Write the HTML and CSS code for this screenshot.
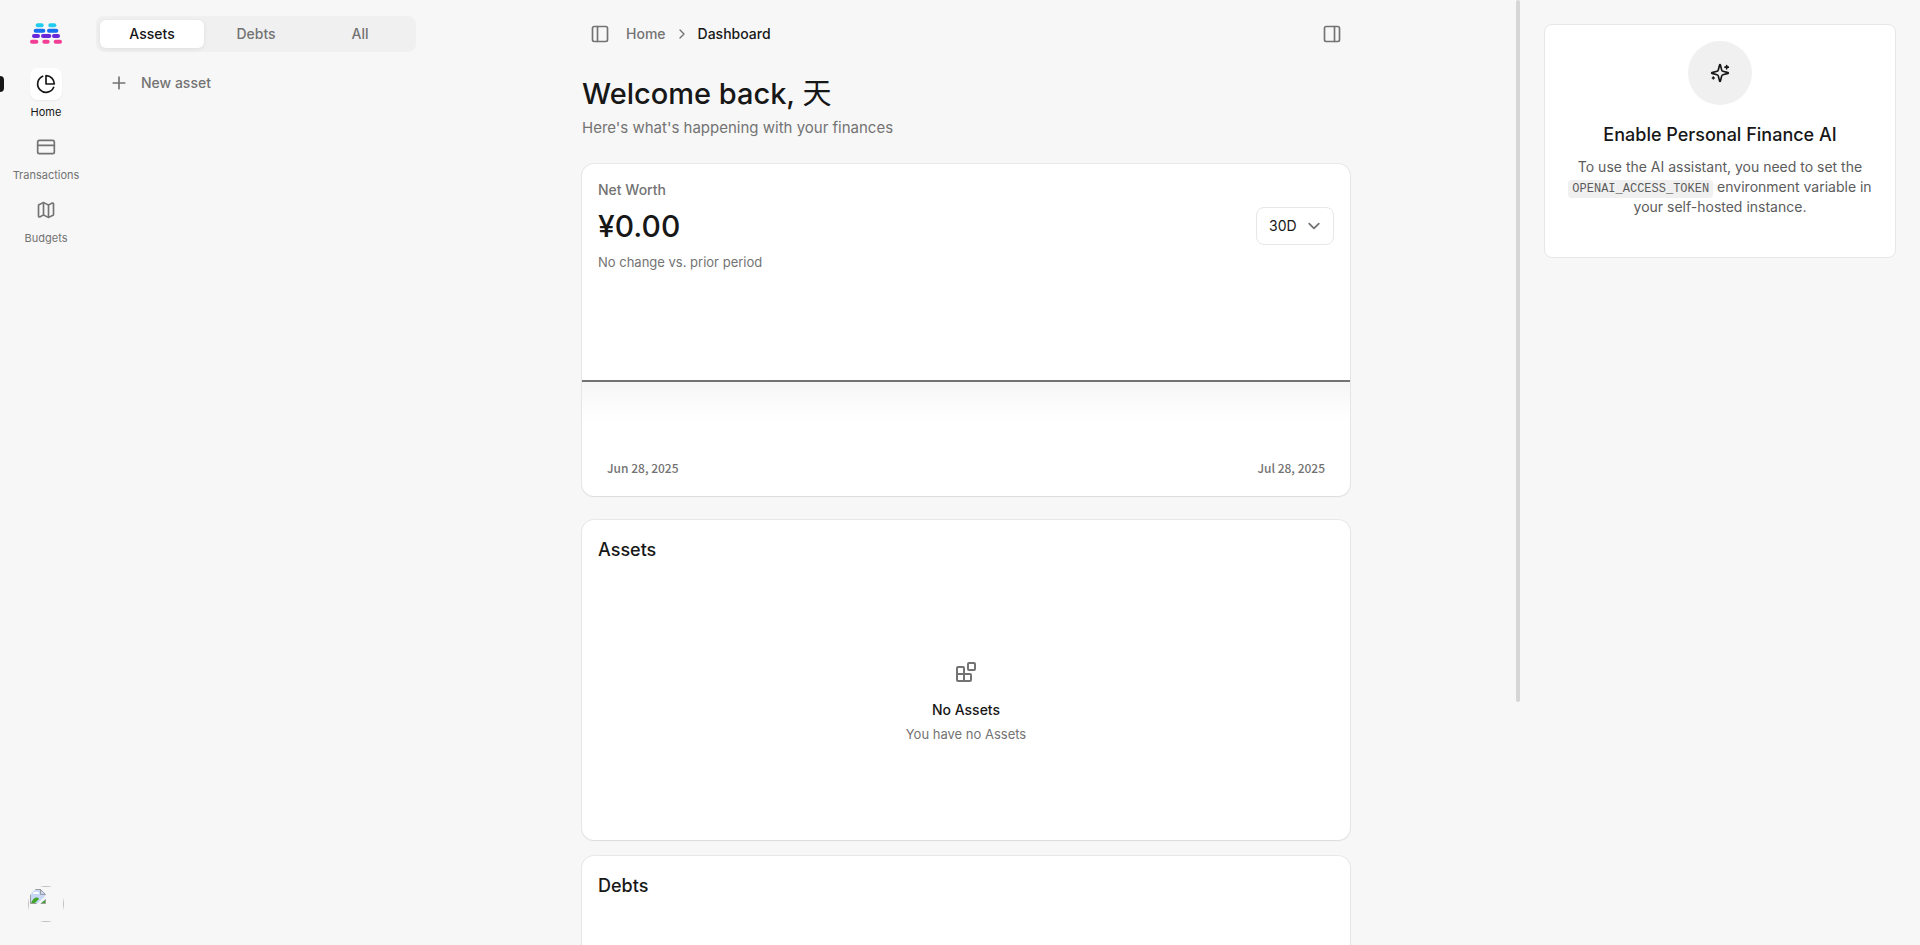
FILE: index.html
```html
<!doctype html>
<html lang="en">
	<head>
		<meta charset="utf-8">
		<meta name="viewport" content="width=device-width, initial-scale=1">
		<title>Dashboard</title>
		<link rel="stylesheet" href="styles.css">
	</head>
	<body>
		<div class="app">
			<nav class="rail">
				<a class="logo" href="#" aria-label="Home page">
					<svg width="32" height="21" viewBox="0 0 96 63">
						<g fill="#22ccee"><rect x="17" y="1" width="24" height="12" rx="6"/><rect x="55" y="1" width="24" height="12" rx="6"/></g>
						<g fill="#1570ef"><rect x="11" y="17" width="35" height="12" rx="6"/><rect x="51" y="17" width="34" height="12" rx="6"/></g>
						<g fill="#6927da"><rect x="6" y="33" width="24" height="12" rx="6"/><rect x="33" y="33" width="31" height="12" rx="6"/><rect x="66" y="33" width="24" height="12" rx="6"/></g>
						<g fill="#f23e94"><rect x="0" y="50" width="25" height="12" rx="6"/><rect x="37" y="50" width="22" height="12" rx="6"/><rect x="71" y="50" width="25" height="12" rx="6"/></g>
					</svg>
				</a>
				<ul class="rail-list">
					<li>
						<a class="rail-item active" href="#">
							<span class="rail-icon"><svg class="icon" viewBox="0 0 24 24"><path d="M21.21 15.89A10 10 0 1 1 8 2.83"/><path d="M22 12A10 10 0 0 0 12 2v10z"/></svg></span>
							Home
						</a>
					</li>
					<li>
						<a class="rail-item" href="#">
							<span class="rail-icon"><svg class="icon" viewBox="0 0 24 24"><rect x="2" y="4" width="20" height="16" rx="2"/><path d="M2 10h20"/></svg></span>
							Transactions
						</a>
					</li>
					<li>
						<a class="rail-item" href="#">
							<span class="rail-icon"><svg class="icon" viewBox="0 0 24 24"><path d="M14.106 5.553a2 2 0 0 0 1.788 0l3.659-1.83A1 1 0 0 1 21 4.619v12.764a1 1 0 0 1-.553.894l-4.553 2.277a2 2 0 0 1-1.788 0l-4.212-2.106a2 2 0 0 0-1.788 0l-3.659 1.83A1 1 0 0 1 3 19.381V6.618a1 1 0 0 1 .553-.894l4.553-2.277a2 2 0 0 1 1.788 0z"/><path d="M15 5.764v15"/><path d="M9 3.236v15"/></svg></span>
							Budgets
						</a>
					</li>
				</ul>
				<button class="avatar" type="button" aria-label="Account menu">
					<span class="avatar-frame">
						<svg width="16" height="16" viewBox="0 0 16 16">
							<path d="M.5 1.500h10l5 5v9h-15z" fill="#c6d7f7"/>
							<path d="M3 6a2 2 0 0 1 3-2 2 2 0 0 1 3 2z" fill="#fff"/>
							<path d="M1 15c2-5 6-7 8-4l-4 4zM11 15l4-3v3z" fill="#42a52a"/>
							<path d="M.5 15.500v-14h10l5 5M10.500 1.500v5h5M.5 15.500h6M10.500 15.500h5v-4" fill="none" stroke="#9a9a9a"/>
							<path d="M16 7L7 16h3l6-6z" fill="#f7f7f7"/>
						</svg>
					</span>
				</button>
			</nav>

			<aside class="accounts">
				<div class="tabs" role="tablist">
					<button class="tab active" type="button" role="tab" aria-selected="true">Assets</button>
					<button class="tab" type="button" role="tab" aria-selected="false">Debts</button>
					<button class="tab" type="button" role="tab" aria-selected="false">All</button>
				</div>
				<a class="new-account" href="#">
					<svg class="icon" viewBox="0 0 24 24"><path d="M5 12h14M12 5v14"/></svg>
					New asset
				</a>
			</aside>

			<main class="main">
				<div class="content">
					<header class="topbar">
						<button class="icon-btn" type="button" aria-label="Toggle left sidebar"><svg class="icon" viewBox="0 0 24 24"><rect x="3" y="3" width="18" height="18" rx="2"/><path d="M9 3v18"/></svg></button>
						<nav class="breadcrumbs">
							<a href="#">Home</a>
							<svg class="icon icon-sm" viewBox="0 0 24 24"><path d="m9 18 6-6-6-6"/></svg>
							<span class="current">Dashboard</span>
						</nav>
						<button class="icon-btn" type="button" aria-label="Toggle right sidebar"><svg class="icon" viewBox="0 0 24 24"><rect x="3" y="3" width="18" height="18" rx="2"/><path d="M15 3v18"/></svg></button>
					</header>

					<div class="welcome">
						<h1>Welcome back, <span lang="zh">天</span></h1>
						<p>Here's what's happening with your finances</p>
					</div>

					<section class="card networth">
						<div class="networth-head">
							<div class="networth-figures">
								<p class="label">Net Worth</p>
								<p class="amount">¥0.00</p>
								<p class="note">No change vs. prior period</p>
							</div>
							<div class="period">
								<select aria-label="Period">
									<option>1D</option>
									<option>7D</option>
									<option selected>30D</option>
									<option>90D</option>
									<option>1Y</option>
								</select>
								<svg class="period-arrow" viewBox="0 0 20 20"><path d="m6 8 4 4 4-4"/></svg>
							</div>
						</div>
						<div class="chart">
							<div class="chart-area"></div>
							<div class="chart-axis"><span>Jun 28, 2025</span><span>Jul 28, 2025</span></div>
						</div>
					</section>

					<div class="balance">
						<section class="card sheet">
							<h2>Assets</h2>
							<div class="empty">
								<svg class="icon icon-lg" viewBox="0 0 24 24"><rect x="14" y="3" width="7" height="7" rx="1"/><path d="M10 21V8a1 1 0 0 0-1-1H4a1 1 0 0 0-1 1v12a1 1 0 0 0 1 1h12a1 1 0 0 0 1-1v-5a1 1 0 0 0-1-1H3"/></svg>
								<p class="empty-title">No Assets</p>
								<p class="note">You have no Assets</p>
							</div>
						</section>
						<section class="card sheet">
							<h2>Debts</h2>
						</section>
					</div>
				</div>
			</main>
			<div class="scrollbar"><div class="scrollbar-thumb" style="height: 74.3%"></div></div>

			<aside class="assistant">
				<div class="ai-card">
					<div class="ai-icon">
						<svg class="icon" viewBox="0 0 24 24"><path d="M9.937 15.5A2 2 0 0 0 8.5 14.063l-6.135-1.582a.5.5 0 0 1 0-.962L8.5 9.936A2 2 0 0 0 9.937 8.5l1.582-6.135a.5.5 0 0 1 .963 0L14.063 8.5A2 2 0 0 0 15.5 9.937l6.135 1.581a.5.5 0 0 1 0 .964L15.5 14.063a2 2 0 0 0-1.437 1.437l-1.582 6.135a.5.5 0 0 1-.963 0z"/><path d="M20 3v4M22 5h-4M4 17v2M5 18H3"/></svg>
					</div>
					<h3>Enable Personal Finance AI</h3>
					<p>To use the AI assistant, you need to set the <code>OPENAI_ACCESS_TOKEN</code> environment variable in your self-hosted instance.</p>
				</div>
			</aside>
		</div>
	</body>
</html>
```
FILE: styles.css
```css
* { box-sizing: border-box; }
body {
	margin: 0;
	background: #f7f7f7;
	color: #171717;
	font: 14px/20px Inter, "Noto Sans CJK SC", sans-serif;
}
h1, h2, h3, p, ul { margin: 0; padding: 0; font-weight: 400; }
ul { list-style: none; }
a { color: inherit; text-decoration: none; }
button { border: 0; padding: 0; background: none; color: inherit; font: inherit; cursor: pointer; }

.icon { width: 20px; height: 20px; flex: none; display: block; fill: none; stroke: currentColor; stroke-width: 2; stroke-linecap: round; stroke-linejoin: round; }
.icon-sm { width: 16px; height: 16px; }
.icon-lg { width: 24px; height: 24px; }

.app { display: flex; height: 100vh; overflow: hidden; color: #737373; }

/* left rail */
.rail { width: 92px; flex: none; display: flex; flex-direction: column; align-items: center; padding: 23px 0; }
.logo svg { display: block; }
.rail-list { display: flex; flex-direction: column; gap: 11px; width: 100%; margin-top: 24px; flex: 1; }
.rail-item { position: relative; display: flex; flex-direction: column; align-items: center; gap: 4px; font-size: 11px; line-height: 16px; }
.rail-icon { display: flex; align-items: center; justify-content: center; width: 32px; height: 32px; border-radius: 8px; }
.rail-item.active { color: #171717; }
.rail-item.active .rail-icon { background: #fff; box-shadow: 0 1px 2px rgba(0,0,0,0.06); }
.rail-item.active::before { content: ""; position: absolute; left: 0; top: 8px; width: 4px; height: 16px; border-radius: 0 4px 4px 0; background: #171717; }
.avatar { width: 36px; height: 36px; border-radius: 50%; overflow: hidden; }
.avatar-frame { display: block; width: 36px; height: 36px; padding: 1px; border: 1px solid #c0c0c0; }
.avatar-frame svg { display: block; }

/* account list */
.accounts { width: 324px; flex: none; padding: 16px 0 16px 4px; font-weight: 500; }
.tabs { display: flex; padding: 4px; border-radius: 8px; background: #f0f0f0; }
.tab { flex: 1; height: 28px; border-radius: 6px; font-weight: 500; }
.tab.active { background: #fff; color: #171717; box-shadow: 0 1px 4px rgba(0,0,0,0.08); }
.new-account { display: flex; align-items: center; gap: 12px; margin-top: 12px; padding: 9px 13px; }

/* main column */
.main { flex: 1; min-width: 0; overflow: hidden; }
.content { max-width: 848px; margin: 0 auto; padding: 16px 40px 96px; }
.scrollbar { width: 4px; flex: none; }
.scrollbar-thumb { border-radius: 4px; background: #d6d6d6; }
.topbar { display: flex; align-items: center; gap: 8px; }
.icon-btn { display: flex; align-items: center; justify-content: center; width: 36px; height: 36px; }
.breadcrumbs { flex: 1; display: flex; align-items: center; gap: 8px; font-weight: 500; }
.breadcrumbs .current { color: #171717; }
.welcome { margin: 24px 0; font-size: 15px; line-height: 24px; }
.welcome h1 { margin-bottom: 4px; color: #171717; font-size: 29px; line-height: 36px; font-weight: 500; }
.welcome h1 span { font-weight: 400; }

.card { border-radius: 12px; background: #fff; box-shadow: 0 0 0 1px rgba(0,0,0,0.06), 0 1px 2px rgba(0,0,0,0.06); }
.note { font-size: 13px; }
.networth-head { display: flex; align-items: center; justify-content: space-between; padding: 16px 16px 0; }
.networth-figures { display: flex; flex-direction: column; gap: 8px; }
.networth .label { font-weight: 500; }
.networth .amount { color: #171717; font-size: 30px; line-height: 36px; font-weight: 500; }
.period { position: relative; }
.period select { appearance: none; width: 78px; height: 38px; padding: 0 12px; border: 1px solid #e7e7e7; border-radius: 8px; background: #fff; color: #171717; font: inherit; }
.period-arrow { position: absolute; right: 8px; top: 7px; width: 24px; height: 24px; fill: none; stroke: #737373; stroke-width: 1.5; stroke-linecap: round; stroke-linejoin: round; pointer-events: none; }
.chart { padding-top: 108px; }
.chart-area { height: 76px; border-top: 2px solid #737373; background: linear-gradient(#f6f6f6, #fff 40px); }
.chart-axis { display: flex; justify-content: space-between; padding: 2px 25px 18px; font: 500 12px/20px "Noto Sans CJK SC", sans-serif; }

.balance { display: flex; flex-direction: column; gap: 16px; margin-top: 24px; }
.sheet { display: flex; flex-direction: column; min-height: 320px; }
.sheet h2 { padding: 16px 16px 0; color: #171717; font-size: 18px; line-height: 28px; font-weight: 500; }
.empty { flex: 1; display: flex; flex-direction: column; align-items: center; justify-content: center; gap: 4px; }
.empty .icon { margin-bottom: 12px; }
.empty-title { color: #171717; font-weight: 500; }

/* AI panel */
.assistant { width: 400px; flex: none; padding: 24px; }
.ai-card { padding: 16px 16px 40px; border: 1px solid #e7e7e7; border-radius: 8px; background: #fff; color: #5c5c5c; text-align: center; }
.ai-icon { display: flex; align-items: center; justify-content: center; width: 64px; height: 64px; margin: 0 auto 16px; border-radius: 50%; background: #f0f0f0; color: #171717; }
.ai-card h3 { margin-bottom: 8px; color: #171717; font-size: 18px; line-height: 28px; font-weight: 500; }
.ai-card code { padding: 2px 4px; border-radius: 4px; background: #f0f0f0; font: 12px "Liberation Mono", monospace; }
```
